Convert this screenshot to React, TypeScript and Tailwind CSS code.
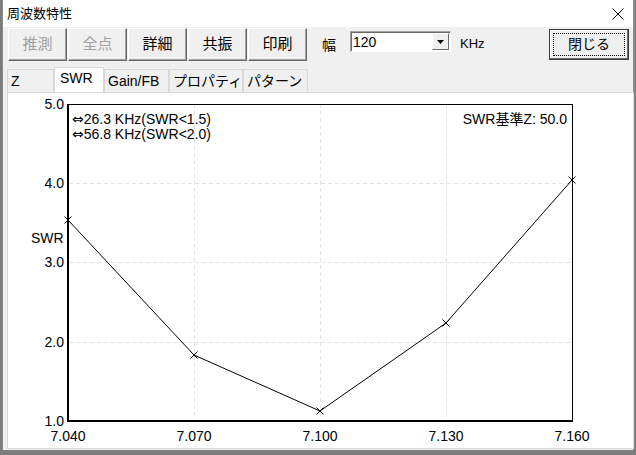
import React from 'react';

const pts: [number, number][] = [
  [67, 219],
  [193, 354],
  [319, 410],
  [445, 322],
  [571, 179],
];

const ui = { fontFamily: '"Liberation Sans", "Noto Sans CJK JP", sans-serif' };

function ToolButton({ label, disabled }: { label: string; disabled?: boolean }) {
  return (
    <button
      type="button"
      className={`flex h-[33px] w-[59px] items-center justify-center border border-t-white border-l-white border-r-[#696969] border-b-[#696969] bg-[#f0f0f0] text-[15px] shadow-[inset_-1px_-1px_0_#a0a0a0] ${
        disabled ? 'text-[#a0a0a0]' : 'text-black'
      }`}
    >
      {label}
    </button>
  );
}

function Tab({ label, active, width }: { label: string; active?: boolean; width: string }) {
  return (
    <div
      className={`flex items-center whitespace-nowrap border border-b-0 border-[#d9d9d9] text-[14px] text-black ${width} ${
        active ? 'h-[25px] bg-white pl-[5px] pb-[3px]' : 'h-[23px] bg-[#f0f0f0] pl-[3px]'
      }`}
    >
      {label}
    </div>
  );
}

function Chart() {
  const yTicks = [
    { v: '5.0', y: 103 },
    { v: '4.0', y: 182 },
    { v: '3.0', y: 261 },
    { v: '2.0', y: 341 },
    { v: '1.0', y: 420 },
  ];
  const xTicks = [
    { v: '7.040', x: 67 },
    { v: '7.070', x: 193 },
    { v: '7.100', x: 319 },
    { v: '7.130', x: 445 },
    { v: '7.160', x: 571 },
  ];
  return (
    <svg width={625} height={355} className="block">
      <g transform="translate(-7,-92)" fontFamily='"Liberation Sans", "Noto Sans CJK JP", sans-serif' fontSize={14} fill="#000">
        {/* grid */}
        {yTicks.slice(1, 4).map((t) => (
          <line key={t.v} x1={68} x2={571} y1={t.y + 0.5} y2={t.y + 0.5} stroke="#e3e3e3" strokeDasharray="4 3" />
        ))}
        {xTicks.slice(1, 4).map((t) => (
          <line key={t.v} x1={t.x + 0.5} x2={t.x + 0.5} y1={103} y2={419} stroke="#e3e3e3" strokeDasharray="4 3" />
        ))}
        {/* frame */}
        <line x1={67} x2={571} y1={103.5} y2={103.5} stroke="#000" />
        <line x1={571.5} x2={571.5} y1={103} y2={420} stroke="#000" />
        <line x1={67} x2={67} y1={103} y2={421} stroke="#000" strokeWidth={2} />
        <line x1={66} x2={572} y1={420} y2={420} stroke="#000" strokeWidth={2} />
        {/* data */}
        <polyline points={pts.map((p) => p.join(',')).join(' ')} fill="none" stroke="#000" strokeWidth={1} />
        {pts.map(([x, y]) => (
          <g key={x} stroke="#000" strokeWidth={1}>
            <line x1={x - 3.5} y1={y - 3.5} x2={x + 3.5} y2={y + 3.5} />
            <line x1={x - 3.5} y1={y + 3.5} x2={x + 3.5} y2={y - 3.5} />
          </g>
        ))}
        {/* labels */}
        {yTicks.map((t) => (
          <text key={t.v} x={63} y={t.y} textAnchor="end" dominantBaseline="central">
            {t.v}
          </text>
        ))}
        {xTicks.map((t) => (
          <text key={t.v} x={t.x} y={435} textAnchor="middle" dominantBaseline="central">
            {t.v}
          </text>
        ))}
        <text x={30} y={237} dominantBaseline="central">SWR</text>
        <text x={71} y={118} dominantBaseline="central">
          <tspan fontFamily='"DejaVu Sans", sans-serif'>⇔</tspan>26.3 KHz(SWR&lt;1.5)
        </text>
        <text x={71} y={133} dominantBaseline="central">
          <tspan fontFamily='"DejaVu Sans", sans-serif'>⇔</tspan>56.8 KHz(SWR&lt;2.0)
        </text>
        <text x={566} y={118} textAnchor="end" dominantBaseline="central">SWR基準Z: 50.0</text>
      </g>
    </svg>
  );
}

export default function App() {
  return (
    <div className="flex h-[455px] w-[636px] flex-col bg-[#7c7c7c]" style={ui}>
      <div className="ml-[2px] flex h-[450px] w-[633px] flex-col border-l border-r-2 border-[#8a8a8a] bg-[#f0f0f0]">
        {/* title bar */}
        <div className="flex h-[27px] items-center justify-between bg-white pl-[4px] pr-[8px]">
          <span className="text-[13px] text-black">周波数特性</span>
          <svg width={12} height={12} viewBox="0 0 12 12" className="mr-[1px]">
            <path d="M0.5 0.5 L11.5 11.5 M11.5 0.5 L0.5 11.5" stroke="#000" strokeWidth={1} />
          </svg>
        </div>

        {/* toolbar */}
        <div className="flex h-[40px] items-start pl-[5px] pt-[1px]">
          <div className="flex gap-[1px]">
            <ToolButton label="推測" disabled />
            <ToolButton label="全点" disabled />
            <ToolButton label="詳細" />
            <ToolButton label="共振" />
            <ToolButton label="印刷" />
          </div>
          <span className="ml-[15px] mt-[7px] text-[14px] text-black">幅</span>
          <div className="ml-[14px] mt-[3px] flex h-[21px] w-[101px] items-stretch border border-t-[#a0a0a0] border-l-[#a0a0a0] border-r-white border-b-white bg-white shadow-[inset_1px_1px_0_#696969]">
            <span className="flex-1 pl-[2px] pt-[1px] text-[14px] leading-[18px] text-black">120</span>
            <div className="m-[1px] flex w-[17px] items-center justify-center border border-t-white border-l-white border-r-[#696969] border-b-[#696969] bg-[#f0f0f0]">
              <svg width={7} height={4} viewBox="0 0 7 4">
                <path d="M0 0 H7 L3.5 4 Z" fill="#000" />
              </svg>
            </div>
          </div>
          <span className="ml-[9px] mt-[6px] text-[13px] text-black">KHz</span>
          <button
            type="button"
            className="ml-auto mr-[4px] mt-[1px] flex h-[31px] w-[80px] items-center justify-center border border-[#3c3c3c] bg-[#f0f0f0] p-[3px] shadow-[inset_-1px_-1px_0_#696969,inset_1px_1px_0_#fff]"
          >
            <span className="flex h-full w-full items-center justify-center border border-dotted border-black text-[14px] text-black">
              閉じる
            </span>
          </button>
        </div>

        {/* tabs */}
        <div className="flex h-[25px] items-end pl-[4px]">
          <Tab label="Z" width="w-[47px]" />
          <Tab label="SWR" active width="w-[50px]" />
          <Tab label="Gain/FB" width="w-[65px]" />
          <Tab label="プロパティ" width="w-[74px]" />
          <Tab label="パターン" width="w-[65px]" />
        </div>

        {/* panel */}
        <div className="ml-[4px] h-[357px] w-[627px] border border-[#d9d9d9] bg-white">
          <Chart />
        </div>
      </div>
    </div>
  );
}
